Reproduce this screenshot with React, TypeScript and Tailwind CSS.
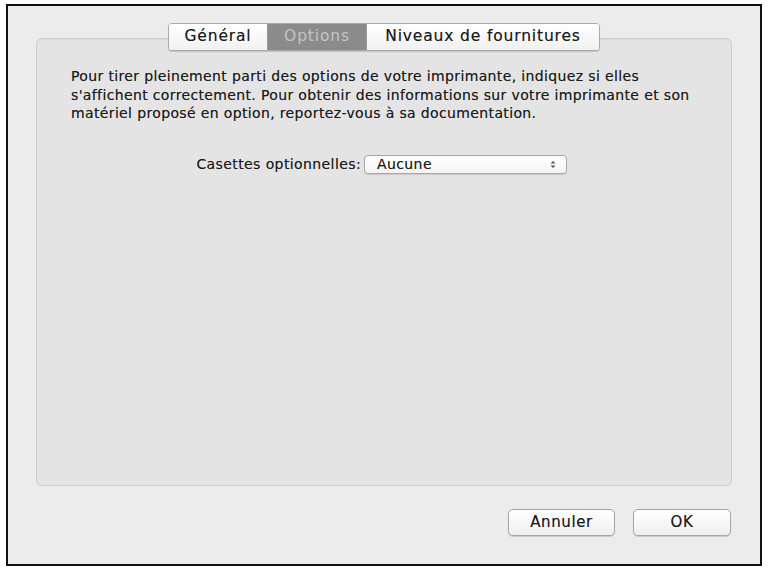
import React from "react";

const TABS = [
  { id: "general", label: "Général", width: "w-[98px]" },
  { id: "options", label: "Options", width: "w-[99px]" },
  { id: "niveaux", label: "Niveaux de fournitures", width: "w-[233px]" },
];

export default function App() {
  const active = "options";

  return (
    <div className="w-[768px] h-[570px] bg-white pt-[4px] pl-[6px]" style={{ fontFamily: '"DejaVu Sans", "Liberation Sans", sans-serif' }}>
      <div className="w-[756px] h-[562px] border-2 border-[#111] bg-[#ececec] flex flex-col px-[28px] pt-[17px]">
        {/* Tab strip */}
        <div className="relative z-10 flex justify-center">
          <div className="flex h-[28px] rounded-[4px] border border-[#a9a9a9] bg-white shadow-[0_1px_1px_rgba(0,0,0,0.15)] overflow-hidden">
            {TABS.map((tab, i) => {
              const isActive = tab.id === active;
              return (
                <div
                  key={tab.id}
                  className={`${tab.width} flex items-center justify-center text-[15.5px] tracking-[0.85px] ${
                    i > 0 ? "border-l border-[#9a9a9a]" : ""
                  } ${
                    isActive
                      ? "bg-[#8b8b8b] text-[#c4c4c4]"
                      : "bg-gradient-to-b from-white to-[#f1f1f1] text-[#1a1a1a] [text-shadow:0_0_0.6px_rgba(0,0,0,0.45)]"
                  }`}
                >
                  {tab.label}
                </div>
              );
            })}
          </div>
        </div>

        {/* Panel */}
        <div className="-mt-[13px] h-[448px] rounded-[5px] border border-[#cfcfcf] bg-[#e4e4e4] shadow-[inset_0_1px_2px_rgba(0,0,0,0.06)] pl-[34px] pt-[28px] text-[#1a1a1a] [text-shadow:0_0_0.6px_rgba(0,0,0,0.45)]">
          <p className="text-[14px] leading-[18.5px] tracking-[0.36px] whitespace-nowrap">
            Pour tirer pleinement parti des options de votre imprimante, indiquez si elles
            <br />
            s'affichent correctement. Pour obtenir des informations sur votre imprimante et son
            <br />
            matériel proposé en option, reportez-vous à sa documentation.
          </p>

          <div className="flex items-center mt-[31px]">
            <span className="w-[290px] text-right text-[14px] tracking-[0.4px] whitespace-nowrap">Casettes optionnelles:</span>
            <div className="ml-[3px] w-[203px] h-[19px] rounded-[4px] border border-[#a8a8a8] bg-gradient-to-b from-white to-[#f4f4f4] shadow-[0_1px_1px_rgba(0,0,0,0.12)] flex items-center justify-between pl-[12px] pr-[10px]">
              <span className="text-[14px] tracking-[0.4px]">Aucune</span>
              <svg width="6" height="9" viewBox="0 0 6 9" className="text-[#555]">
                <path d="M0.5 3.5 L3 1 L5.5 3.5 Z" fill="currentColor" />
                <path d="M0.5 5.5 L3 8 L5.5 5.5 Z" fill="currentColor" />
              </svg>
            </div>
          </div>
        </div>

        {/* Buttons */}
        <div className="flex justify-end gap-[18px] mt-[23px] pr-[1px]">
          <button className="w-[107px] h-[27px] rounded-[5px] border border-[#a4a4a4] bg-gradient-to-b from-white to-[#efefef] shadow-[0_1px_1px_rgba(0,0,0,0.15)] text-[15px] tracking-[0.6px] text-[#1a1a1a] [text-shadow:0_0_0.6px_rgba(0,0,0,0.45)]">
            Annuler
          </button>
          <button className="w-[98px] h-[27px] rounded-[5px] border border-[#a4a4a4] bg-gradient-to-b from-white to-[#efefef] shadow-[0_1px_1px_rgba(0,0,0,0.15)] text-[15px] tracking-[0.6px] text-[#1a1a1a] [text-shadow:0_0_0.6px_rgba(0,0,0,0.45)]">
            OK
          </button>
        </div>
      </div>
    </div>
  );
}
